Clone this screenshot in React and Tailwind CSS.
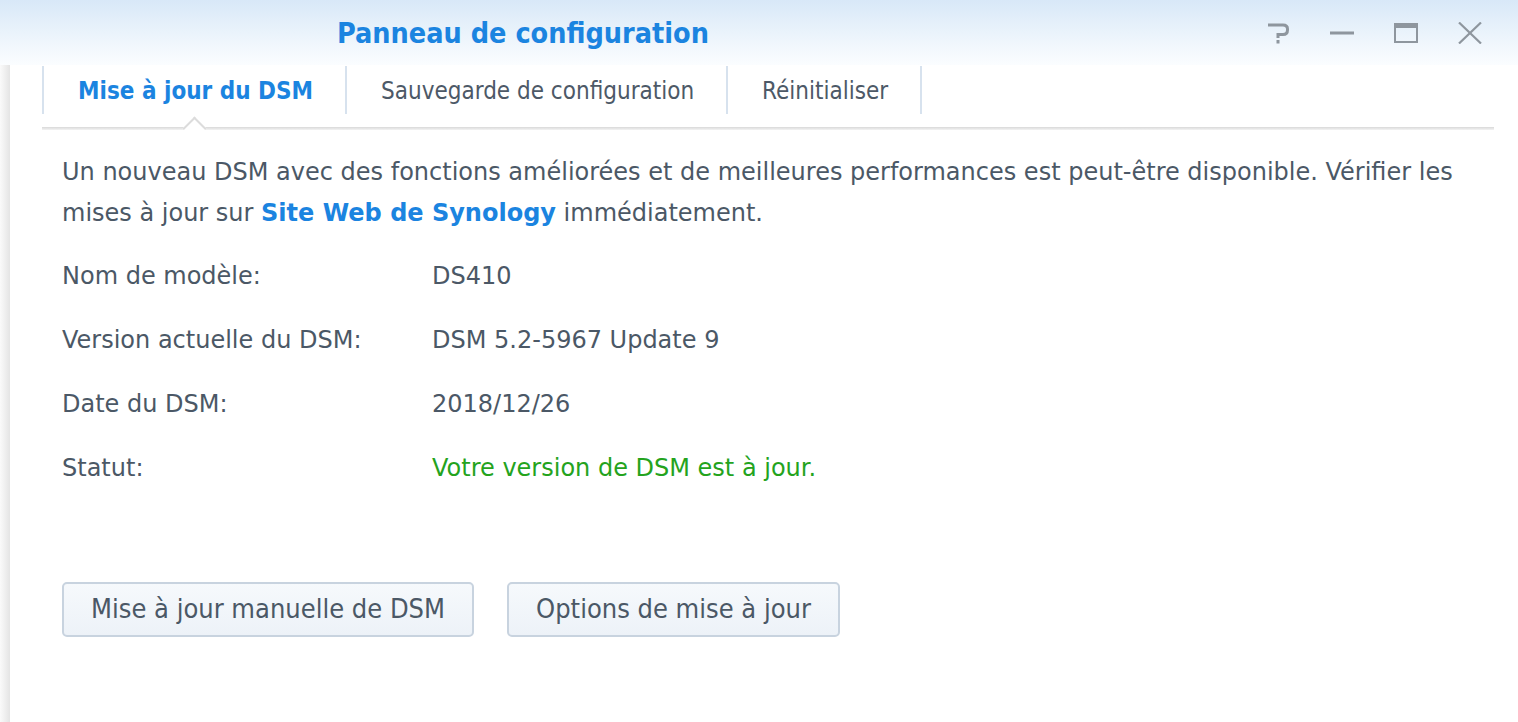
import React from "react";

const BODY_FONT = "font-['DejaVu_Sans',Verdana,sans-serif]";
const COND_FONT = "font-['DejaVu_Sans_Condensed','Liberation_Sans_Narrow','DejaVu_Sans',sans-serif]";

function HelpIcon() {
  return (
    <svg width="22" height="22" viewBox="0 0 22 22" fill="none" stroke="#8e969e" strokeWidth="3">
      <path d="M0 3 H15 Q19.5 3 19.5 7 V8 Q19.5 12.5 15 12.5 H10 V16" />
      <rect x="8.5" y="18" width="3" height="3.5" fill="#8e969e" stroke="none" />
    </svg>
  );
}

function MinimizeIcon() {
  return (
    <svg width="24" height="22" viewBox="0 0 24 22">
      <rect x="0" y="9.5" width="24" height="3" fill="#8e969e" />
    </svg>
  );
}

function MaximizeIcon() {
  return (
    <svg width="24" height="22" viewBox="0 0 24 22" fill="none">
      <rect x="1" y="2" width="22" height="18" stroke="#8e969e" strokeWidth="2" />
      <rect x="0" y="1" width="24" height="5" fill="#8e969e" />
    </svg>
  );
}

function CloseIcon() {
  return (
    <svg width="24" height="22" viewBox="0 0 24 22" stroke="#8e969e" strokeWidth="2.2">
      <path d="M1 0.5 L23 21.5 M23 0.5 L1 21.5" />
    </svg>
  );
}

const tabs = [
  { label: "Mise à jour du DSM", active: true },
  { label: "Sauvegarde de configuration" },
  { label: "Réinitialiser" },
];

const rows = [
  { label: "Nom de modèle:", value: "DS410" },
  { label: "Version actuelle du DSM:", value: "DSM 5.2-5967 Update 9" },
  { label: "Date du DSM:", value: "2018/12/26" },
  { label: "Statut:", value: "Votre version de DSM est à jour.", ok: true },
];

export default function App() {
  return (
    <div className={`w-[1518px] h-[722px] overflow-hidden bg-white ${BODY_FONT}`}>
      {/* title bar */}
      <div className="h-[65px] flex items-center bg-gradient-to-b from-[#d8e8f8] via-[#eaf3fb] to-[#fbfdff]">
        <div className={`pl-[337px] pt-[3px] flex-1 text-[28.5px] font-bold text-[#1b84e0] ${COND_FONT}`}>
          Panneau de configuration
        </div>
        <div className="flex items-center gap-[40px] pr-[36px]">
          <HelpIcon />
          <MinimizeIcon />
          <MaximizeIcon />
          <CloseIcon />
        </div>
      </div>

      <div className="flex h-[657px]">
        <div className="w-[10px] bg-gradient-to-r from-[#fafafa] to-[#e4e4e4]" />
        <div className="flex-1 pl-[32px] pr-[24px]">
          {/* tabs */}
          <div className="relative pt-[1px] pb-[13px]">
            <div className={`flex h-[48px] ${COND_FONT}`}>
              {tabs.map((t, i) => (
                <div
                  key={t.label}
                  className={`relative flex items-center pt-[2px] pl-[34px] pr-[32px] border-l-2 border-[#d7e2ee] text-[24px] ${
                    i === tabs.length - 1 ? "border-r-2" : ""
                  } ${t.active ? "font-bold text-[#1b84e0]" : "text-[#4d5967]"}`}
                >
                  {t.label}
                  {t.active && (
                    <div className="absolute left-[calc(50%-9px)] top-[54px] w-[17px] h-[17px] rotate-45 bg-white border-l-2 border-t-2 border-[#dcdcdc] z-10" />
                  )}
                </div>
              ))}
            </div>
          </div>
          <div className="h-[3px] bg-gradient-to-b from-[#d9d9d9] to-[#f3f3f3]" />

          {/* content */}
          <div className="pl-[20px] pt-[22px] text-[24px] text-[#4b5866]">
            <p className="leading-[41px]">
              Un nouveau DSM avec des fonctions améliorées et de meilleures performances est peut-être disponible. Vérifier les mises à jour sur{" "}
              <span className="font-bold text-[#1b84e0]">Site Web de Synology</span> immédiatement.
            </p>
            <div className="mt-[10px]">
              {rows.map((r) => (
                <div key={r.label} className="flex items-center h-[64px]">
                  <div className="w-[370px]">{r.label}</div>
                  <div className={r.ok ? "text-[#24a31d]" : ""}>{r.value}</div>
                </div>
              ))}
            </div>
            <div className={`flex gap-[33px] mt-[82px] ${COND_FONT}`}>
              <button className="h-[55px] w-[412px] rounded-[5px] border-2 border-[#c8d3df] bg-gradient-to-b from-[#f6f9fc] to-[#edf2f8] text-[27px] text-[#4b5866]">
                Mise à jour manuelle de DSM
              </button>
              <button className="h-[55px] w-[333px] rounded-[5px] border-2 border-[#c8d3df] bg-gradient-to-b from-[#f6f9fc] to-[#edf2f8] text-[27px] text-[#4b5866]">
                Options de mise à jour
              </button>
            </div>
          </div>
        </div>
      </div>
    </div>
  );
}
